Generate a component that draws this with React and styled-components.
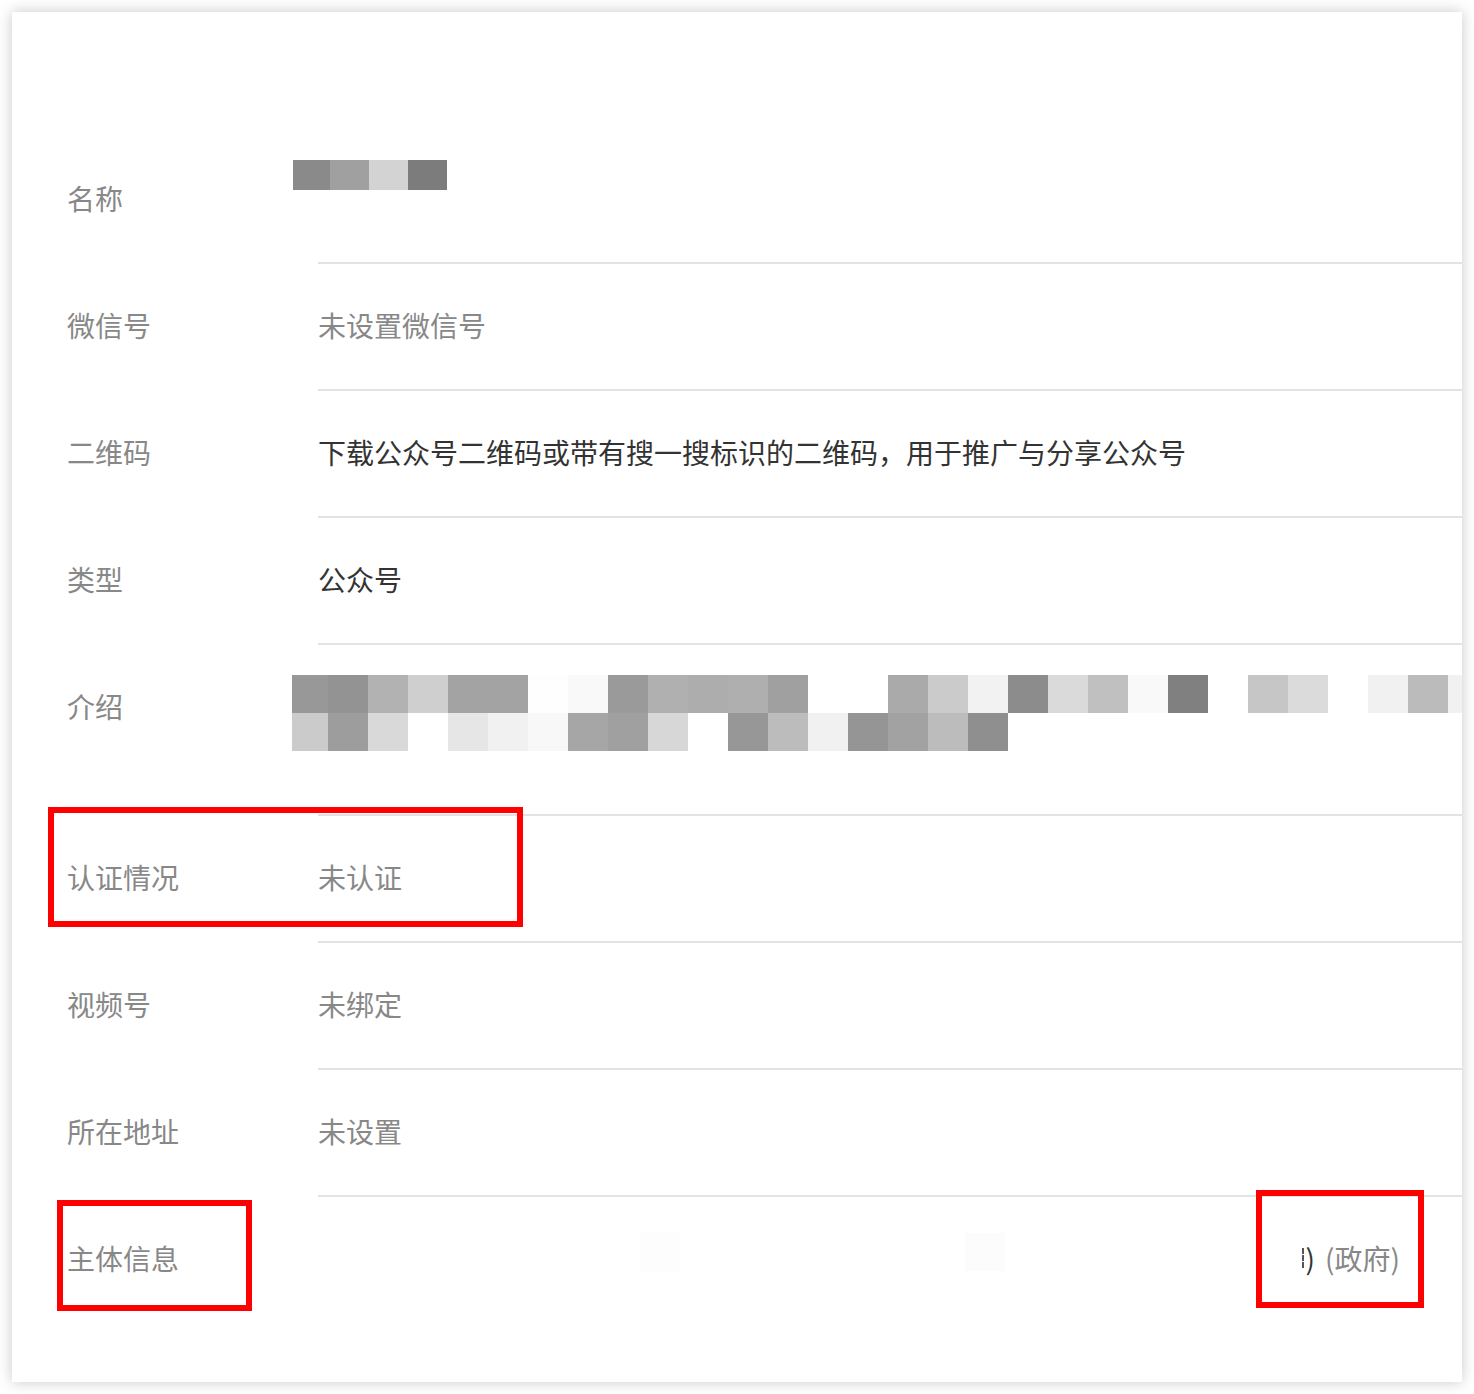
import React from "react";
import styled, { createGlobalStyle } from "styled-components";

const Global = createGlobalStyle`
  html, body { margin: 0; padding: 0; background: #ffffff; }
  body { font-family: "Noto Sans CJK SC", "Noto Sans", sans-serif; }
  * { box-sizing: border-box; }
`;

const Page = styled.div`
  position: relative;
  width: 1474px;
  height: 1394px;
  padding: 12px;
  background: #ffffff;
`;

const Card = styled.div`
  width: 1450px;
  height: 1370px;
  background: #ffffff;
  box-shadow: 0 0 14px rgba(0, 0, 0, 0.22);
  padding-top: 125px;
  padding-left: 55px;
  display: flex;
  flex-direction: column;
`;

const Row = styled.div`
  display: flex;
  height: ${(p) => p.$h}px;
`;

const Label = styled.div`
  width: 251px;
  flex: none;
  padding-top: 41px;
  font-size: 28px;
  line-height: 40px;
  color: #888888;
`;

const Value = styled.div`
  flex: 1;
  display: flex;
  align-items: flex-start;
  justify-content: ${(p) => (p.$right ? "flex-end" : "flex-start")};
  padding-top: 41px;
  padding-right: ${(p) => (p.$right ? "62px" : "0")};
  border-bottom: ${(p) => (p.$last ? "none" : "2px solid #e1e3e7")};
  font-size: 28px;
  line-height: 40px;
  color: ${(p) => (p.$dark ? "#333333" : "#888888")};
  white-space: nowrap;
  position: relative;
`;

const Mosaic = styled.div`
  display: flex;
  flex-direction: column;
  margin-left: ${(p) => p.$ml}px;
  margin-top: ${(p) => p.$mt}px;
`;

const MosaicLine = styled.div`
  display: flex;
`;

const Cell = styled.div`
  width: ${(p) => p.$w || 40}px;
  height: ${(p) => p.$hh || 38}px;
  background: ${(p) => p.$c};
  flex: none;
`;

const FaintCells = styled.div`
  position: absolute;
  left: 322px;
  top: 36px;
  display: flex;
  gap: 285px;
`;

const DarkPart = styled.span`
  color: #333333;
  display: inline-flex;
  align-items: center;
`;

const Dots = styled.span`
  display: inline-block;
  width: 2px;
  height: 20px;
  margin-right: 2px;
  border-left: 2px dashed #555555;
`;

const GrayPart = styled.span`
  color: #888888;
  margin-left: 10px;
`;

const Mark = styled.div`
  position: absolute;
  left: ${(p) => p.$x}px;
  top: ${(p) => p.$y}px;
  width: ${(p) => p.$w}px;
  height: ${(p) => p.$h}px;
  border: 6px solid #ff0000;
  pointer-events: none;
`;

const nameCells = [
  { c: "#8a8a8a", w: 37 },
  { c: "#a0a0a0", w: 39 },
  { c: "#d3d3d3", w: 39 },
  { c: "#7c7c7c", w: 39 },
];

const introRow1 = [
  ["#989898", 36], ["#939393"], ["#b2b2b2"], ["#cfcfcf"], ["#a3a3a3"], ["#a3a3a3"],
  ["#fefefe"], ["#f9f9f9"], ["#9a9a9a"], ["#b0b0b0"], ["#adadad"], ["#afafaf"],
  ["#a0a0a0"], ["#ffffff"], ["#ffffff"], ["#aaaaaa"], ["#cbcbcb"], ["#f2f2f2"],
  ["#8c8c8c"], ["#dadada"], ["#c0c0c0"], ["#f9f9f9"], ["#808080"], ["#ffffff"],
  ["#c6c6c6"], ["#dbdbdb"], ["#ffffff"], ["#f1f1f1"], ["#bbbbbb"], ["#f1f1f1", 14],
];

const introRow2 = [
  ["#cbcbcb", 36], ["#9d9d9d"], ["#d9d9d9"], ["#ffffff"], ["#e6e6e6"], ["#f1f1f1"],
  ["#f8f8f8"], ["#a6a6a6"], ["#a0a0a0"], ["#d7d7d7"], ["#ffffff"], ["#979797"],
  ["#bcbcbc"], ["#f1f1f1"], ["#959595"], ["#a2a2a2"], ["#bcbcbc"], ["#8f8f8f"],
];

const rows = [
  { label: "名称", kind: "name" },
  { label: "微信号", text: "未设置微信号" },
  { label: "二维码", text: "下载公众号二维码或带有搜一搜标识的二维码，用于推广与分享公众号", dark: true },
  { label: "类型", text: "公众号", dark: true },
  { label: "介绍", kind: "intro", h: 171 },
  { label: "认证情况", text: "未认证" },
  { label: "视频号", text: "未绑定" },
  { label: "所在地址", text: "未设置" },
  { label: "主体信息", kind: "subject", last: true },
];

function renderValue(r) {
  if (r.kind === "name") {
    return (
      <Mosaic $ml={-25} $mt={-18}>
        <MosaicLine>
          {nameCells.map((c, i) => (
            <Cell key={i} $c={c.c} $w={c.w} $hh={30} />
          ))}
        </MosaicLine>
      </Mosaic>
    );
  }
  if (r.kind === "intro") {
    return (
      <Mosaic $ml={-26} $mt={-11}>
        <MosaicLine>
          {introRow1.map(([c, w], i) => (
            <Cell key={i} $c={c} $w={w} />
          ))}
        </MosaicLine>
        <MosaicLine>
          {introRow2.map(([c, w], i) => (
            <Cell key={i} $c={c} $w={w} />
          ))}
        </MosaicLine>
      </Mosaic>
    );
  }
  if (r.kind === "subject") {
    return (
      <>
        <FaintCells>
          <Cell $c="#fdfdfd" />
          <Cell $c="#fcfcfc" />
        </FaintCells>
        <DarkPart>
          <Dots />)
        </DarkPart>
        <GrayPart>(政府)</GrayPart>
      </>
    );
  }
  return r.text;
}

export default function App() {
  return (
    <>
      <Global />
      <Page>
        <Card>
          {rows.map((r, i) => (
            <Row key={i} $h={r.h || 127}>
              <Label>{r.label}</Label>
              <Value $dark={r.dark} $last={r.last} $right={r.kind === "subject"}>
                {renderValue(r)}
              </Value>
            </Row>
          ))}
        </Card>
        <Mark $x={48} $y={807} $w={475} $h={120} />
        <Mark $x={57} $y={1200} $w={195} $h={111} />
        <Mark $x={1256} $y={1190} $w={168} $h={118} />
      </Page>
    </>
  );
}
